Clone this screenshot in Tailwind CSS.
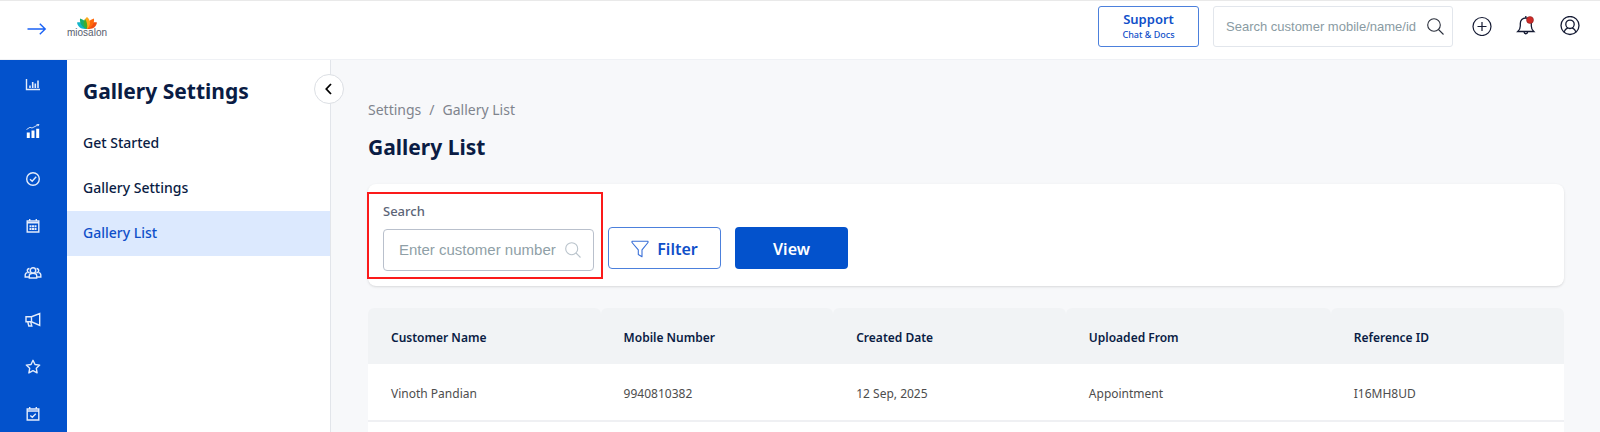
<!DOCTYPE html>
<html lang="en">
<head>
<meta charset="utf-8">
<meta name="viewport" content="width=device-width, initial-scale=1">
<title>Gallery List</title>
<script src="https://cdn.jsdelivr.net/npm/@tailwindcss/browser@4"></script>
</head>
<body class="flex h-screen flex-col overflow-hidden bg-[#f7f8fa] font-['Noto_Sans',sans-serif] text-[#0a1c44]">
<header class="flex h-[60px] shrink-0 items-start justify-between border-t border-b border-t-[#e9e9e9] border-b-[#eff1f5] bg-white pr-5 pl-[27px]">
  <div class="flex items-start gap-[21px]">
    <button type="button" aria-label="Open menu" class="mt-[22px]">
      <svg class="block h-3 w-5" viewBox="0 0 20 12" fill="none" stroke="#1a62f5" stroke-width="1.4"><path d="M.5 6H18M12.8.8 18.2 6l-5.4 5.2"/></svg>
    </button>
    <a href="#" aria-label="miosalon" class="flex w-[38px] flex-col items-center pt-4">
      <svg class="block h-3 w-5" viewBox="0 0 20 12">
        <path d="M0 5.500c5-1 9 1.500 10 6.500C4 12.300 1 10 0 5.500Z" fill="#12b5c9"/>
        <path d="M20 5.500c-5-1-9 1.500-10 6.500 6 .3 9-2 10-6.500Z" fill="#f04e12"/>
        <path d="M3 1.500c5 1.500 8.500 5.500 7 10.500C5 10.500 2.500 6.500 3 1.500Z" fill="#16ae70"/>
        <path d="M17 1.500c-5 1.500-8.500 5.500-7 10.500 5-1.500 7.500-5.500 7-10.500Z" fill="#ff6a0c"/>
        <path d="M10 0C6 3.500 6 8 10 12c4-4 4-8.500 0-12Z" fill="#fba81b"/>
        <path d="M8 2C5.500 6 6.500 9.500 10 12c.7-4-.2-7.500-2-10Z" fill="#3fae2a"/>
      </svg>
      <span class="font-['Liberation_Sans',sans-serif] text-[10px] leading-[8px] text-[#59606e]">miosalon</span>
    </a>
  </div>
  <div class="flex items-start pt-[5px]">
    <button type="button" class="flex h-[41px] w-[101px] flex-col items-center justify-center rounded-[3px] border border-[#4c80dc] pb-px text-[#0f4fc9]">
      <span class="text-[13px] leading-[18px] font-semibold">Support</span>
      <span class="text-[9px] leading-[14px] font-medium">Chat &amp; Docs</span>
    </button>
    <div class="ml-[14px] flex h-[41px] w-[240px] items-center rounded-[3px] border border-[#e2e6ec] pr-2 pl-3">
      <input type="text" aria-label="Search customer" placeholder="Search customer mobile/name/id" class="min-w-0 flex-1 font-['Liberation_Sans',sans-serif] text-[13px] outline-none placeholder:text-[#8a9ba3]">
      <svg class="block size-[17px]" viewBox="0 0 17 17" fill="none" stroke="#2a2f3c" stroke-width="1.100"><circle cx="7" cy="7" r="6.300"/><path d="m11.500 11.500 5 5"/></svg>
    </div>
    <div class="ml-[19px] flex h-10 items-center gap-6 text-[#141a33]">
      <button type="button" aria-label="Add"><svg class="block size-5" viewBox="0 0 20 20" fill="none" stroke="currentColor" stroke-width="1.200"><circle cx="10" cy="10.500" r="9"/><path d="M10 6v9M5.500 10.500h9"/></svg></button>
      <button type="button" aria-label="Notifications"><svg class="block size-5" viewBox="0 0 20 20" fill="none" stroke="currentColor" stroke-width="1.300"><path d="M1.800 15.500c1.700-1.500 2.500-3 2.500-5.500V7.500c0-3.300 2.200-5.500 5.500-5.500s5.500 2.200 5.500 5.500V10c0 2.500.8 4 2.500 5.500ZM9.800 2V0M8 16c.3 2.300 3.400 2.300 3.700 0"/><circle cx="14" cy="4" r="3.500" fill="#cf2a27" stroke="#7c1c1c" stroke-width=".5"/></svg></button>
      <button type="button" aria-label="Account"><svg class="block size-5" viewBox="0 0 20 20" fill="none" stroke="currentColor" stroke-width="1.300"><circle cx="10" cy="9.500" r="9"/><circle cx="10" cy="8.300" r="4.200"/><path d="M4 16.100c.8-2.400 2.100-3.600 3.800-4.300M16 16.100c-.8-2.400-2.100-3.600-3.800-4.300"/></svg></button>
    </div>
  </div>
</header>
<div class="flex min-h-0 flex-1">
  <nav aria-label="Main" class="flex w-[67px] shrink-0 flex-col overflow-hidden bg-[#0352cc] pt-px pr-px text-[#e4ecfb]">
    <a href="#" aria-label="Dashboard" class="flex h-[47px] shrink-0 items-center justify-center"><svg class="block size-4" viewBox="0 0 16 16" fill="none" stroke="currentColor"><path d="M1.500 2v10.500H15" stroke-width="1.400"/><path d="M5 11V8.500M7.700 11V5M10.300 11V6.500M13 11V3.500" stroke-width="1.600"/></svg></a>
    <a href="#" aria-label="Reports" class="flex h-[47px] shrink-0 items-center justify-center"><svg class="block size-4" viewBox="0 0 16 16" fill="none" stroke="currentColor"><path d="M3.300 14V8.500M8 14V6.500M12.700 14V4.800" stroke="#fff" stroke-width="3"/><path d="M1.500 5.500 5 3.300l2 .7L13.500.7M11.500.4l2.500 0-1 1.800" stroke-width=".9"/></svg></a>
    <a href="#" aria-label="Tasks" class="flex h-[47px] shrink-0 items-center justify-center"><svg class="block size-4" viewBox="0 0 16 16" fill="none" stroke="currentColor" stroke-width="1.400"><circle cx="8" cy="8" r="6.300"/><path d="m5 8.300 2.200 2 4-4.500"/></svg></a>
    <a href="#" aria-label="Calendar" class="flex h-[47px] shrink-0 items-center justify-center"><svg class="block size-4" viewBox="0 0 16 16" fill="none" stroke="currentColor" stroke-width="1.400"><path d="M2.200 3h11.600v11H2.200ZM2.200 4.700h11.600M4.700 1v2.500M11.300 1v2.500"/><path d="M4.500 8.200h7M4.500 11h7" stroke-width="2" stroke-dasharray="2 .5"/></svg></a>
    <a href="#" aria-label="Customers" class="flex h-[47px] shrink-0 items-center justify-center"><svg class="block h-4 w-[18px]" viewBox="0 0 18 16" fill="none" stroke="currentColor" stroke-width="1.400"><path d="M5.300 13v-2.200c0-1.600 1.300-2.600 3.700-2.600s3.700 1 3.700 2.600V13ZM5 12H1.200v-2c0-1.300 1-2.200 2.300-2.400M13 12h3.800v-2c0-1.300-1-2.200-2.300-2.400"/><circle cx="9" cy="5.500" r="2.700"/><path d="M5.700 7.500C2.800 8 2.300 3.800 5.500 3.500M12.300 7.500C15.200 8 15.700 3.800 12.500 3.500"/></svg></a>
    <a href="#" aria-label="Marketing" class="flex h-[47px] shrink-0 items-center justify-center"><svg class="block size-4" viewBox="0 0 16 16" fill="none" stroke="currentColor" stroke-width="1.400"><path d="M1 4.700h5.500L14.700 1.500v12L6.500 9.800H1ZM6.500 4.700v5.100M2.800 10l1 4h3l-1-3.700"/></svg></a>
    <a href="#" aria-label="Reviews" class="flex h-[47px] shrink-0 items-center justify-center"><svg class="block size-4" viewBox="0 0 16 16" fill="none" stroke="currentColor" stroke-width="1.400" stroke-linejoin="round"><path d="m8 1.300 2 4.200 4.700.6-3.400 3.200.8 4.600L8 11.700l-4.100 2.200.8-4.600L1.300 6.100 6 5.500Z"/></svg></a>
    <a href="#" aria-label="Bookings" class="flex h-[47px] shrink-0 items-center justify-center"><svg class="block size-4" viewBox="0 0 16 16" fill="none" stroke="currentColor" stroke-width="1.400"><path d="M2.200 3h11.600v11H2.200ZM2.200 5h11.600M4.700 1v2.500M11.300 1v2.500M5.300 9.500l2 1.800 3.500-3.500"/></svg></a>
  </nav>
  <aside class="relative w-[264px] shrink-0 border-r border-[#e2e5ea] bg-white">
    <h2 class="flex h-[61px] items-center pt-px pl-4 text-[21px] leading-[30px] font-bold">Gallery Settings</h2>
    <ul class="text-[14px] font-medium">
      <li><a href="#" class="flex h-[45px] items-center pb-[2px] pl-4">Get Started</a></li>
      <li><a href="#" class="flex h-[45px] items-center pb-[2px] pl-4">Gallery Settings</a></li>
      <li><a href="#" aria-current="page" class="flex h-[45px] items-center bg-[#dce9fe] pb-[2px] pl-4 text-[#0f4fc9]">Gallery List</a></li>
    </ul>
    <button type="button" aria-label="Collapse panel" class="absolute top-[14px] -right-[14px] flex size-[30px] items-center justify-center rounded-full border border-[#dcdfe4] bg-white">
      <svg class="block size-3" viewBox="0 0 12 12" fill="none" stroke="#000" stroke-width="1.800"><path d="M8 1 3.300 6 8 11"/></svg>
    </button>
  </aside>
  <main class="min-w-0 flex-1 overflow-hidden pt-10 pr-9 pl-[37px]">
    <nav aria-label="Breadcrumb" class="flex gap-2 text-[14px] leading-5 text-[#7f848d]"><a href="#">Settings</a><span>/</span><a href="#">Gallery List</a></nav>
    <h1 class="mt-3 text-[21px] leading-[30px] font-bold">Gallery List</h1>
    <form class="relative mt-[22px] flex h-[102px] items-end rounded-lg bg-white pb-[15px] pl-[15px] shadow-sm">
      <div class="flex w-[211px] flex-col gap-[9px]">
        <label for="customer" class="text-[13px] leading-[18px] font-medium text-[#5c6577]">Search</label>
        <div class="flex h-[42px] items-center rounded-[4px] border border-[#b9c0cc] pr-3 pl-[15px]">
          <input id="customer" type="text" placeholder="Enter customer number" class="min-w-0 flex-1 font-['Liberation_Sans',sans-serif] text-[15px] outline-none placeholder:text-[#8f9fa7]">
          <svg class="block size-4" viewBox="0 0 16 16" fill="none" stroke="#b9c3cb" stroke-width="1.100"><circle cx="6.700" cy="6.700" r="6"/><path d="m11 11 4.500 4.500"/></svg>
        </div>
      </div>
      <div class="mb-[2px] ml-[14px] flex gap-[14px] text-[16px] font-semibold">
        <button type="button" class="flex h-[42px] w-[113px] items-center justify-center gap-2 rounded-[4px] border border-[#4c80dc] pt-px text-[#0f4fc9]">
          <svg class="block size-[18px]" viewBox="0 0 18 18" fill="none" stroke="#3a70d8" stroke-width="1.100" stroke-linejoin="round"><path d="M1 1.200h16v1.300L11 9.800v7L7.300 14.500V9.800L1 2.500Z"/></svg>
          Filter
        </button>
        <button type="submit" class="flex h-[42px] w-[113px] items-center justify-center rounded-[4px] bg-[#0352cc] pt-px text-white">View</button>
      </div>
      <div class="pointer-events-none absolute top-2 left-0 -ml-px h-[87px] w-[236px] border-2 border-[#fb1a1a]"></div>
    </form>
    <table class="mt-[22px] w-full table-fixed text-left text-[12px]">
      <colgroup><col class="w-[19.45%]"><col class="w-[19.45%]"><col class="w-[19.45%]"><col class="w-[22.15%]"><col></colgroup>
      <thead>
        <tr class="h-14">
          <th scope="col" class="rounded-t-[6px] bg-[#f1f3f5] pt-[3px] pl-[23px] font-semibold">Customer Name</th>
          <th scope="col" class="rounded-t-[6px] bg-[#f1f3f5] pt-[3px] pl-[23px] font-semibold">Mobile Number</th>
          <th scope="col" class="rounded-t-[6px] bg-[#f1f3f5] pt-[3px] pl-[23px] font-semibold">Created Date</th>
          <th scope="col" class="rounded-t-[6px] bg-[#f1f3f5] pt-[3px] pl-[23px] font-semibold">Uploaded From</th>
          <th scope="col" class="rounded-t-[6px] bg-[#f1f3f5] pt-[3px] pl-[23px] font-semibold">Reference ID</th>
        </tr>
      </thead>
      <tbody class="bg-white text-[#4d4d4d]">
        <tr class="h-[57px] border-b-2 border-[#eff0f3]">
          <td class="pt-[3px] pl-[23px]">Vinoth Pandian</td><td class="pt-[3px] pl-[23px]">9940810382</td><td class="pt-[3px] pl-[23px]">12 Sep, 2025</td><td class="pt-[3px] pl-[23px]">Appointment</td><td class="pt-[3px] pl-[23px]">I16MH8UD</td>
        </tr>
        <tr class="h-[57px]"><td colspan="5"></td></tr>
      </tbody>
    </table>
  </main>
</div>
</body>
</html>
